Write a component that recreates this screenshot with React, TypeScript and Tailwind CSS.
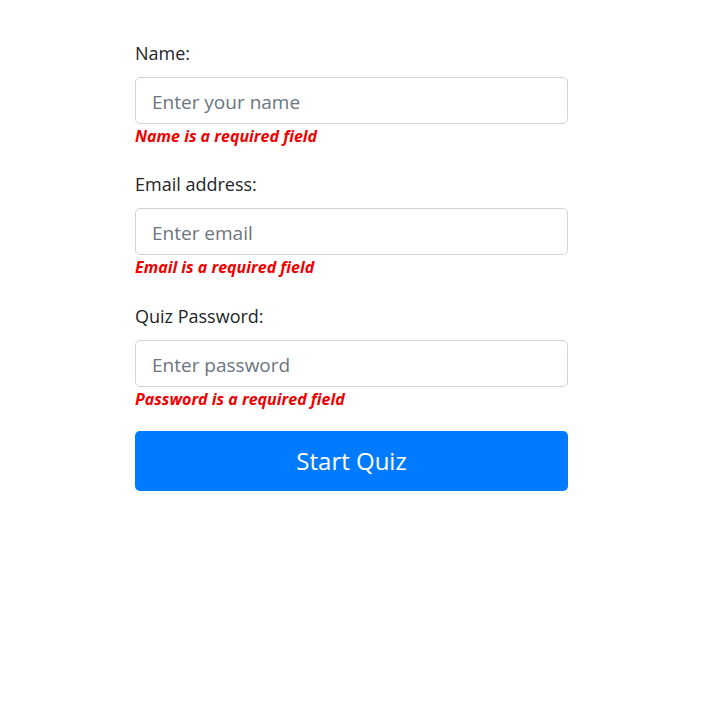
const fields = [
  { label: "Name:", placeholder: "Enter your name", error: "Name is a required field", type: "text", gap: "mb-[25px]" },
  { label: "Email address:", placeholder: "Enter email", error: "Email is a required field", type: "email", gap: "mb-[26px]" },
  { label: "Quiz Password:", placeholder: "Enter password", error: "Password is a required field", type: "password", gap: "mb-[22px]" },
];

export default function App() {
  return (
    <div className="min-h-[712px] w-full bg-white font-['Open_Sans',sans-serif] text-[#212529]">
      <form className="ml-[135px] w-[433px] pt-[40px]" onSubmit={(e) => e.preventDefault()}>
        {fields.map((f) => (
          <div key={f.label} className={f.gap}>
            <label className="mb-[10px] block text-[18px] leading-[27px]">{f.label}</label>
            <input
              type={f.type}
              placeholder={f.placeholder}
              className="block h-[47px] w-full rounded-[5px] border border-[#ced4da] px-4 pt-[2px] text-[19px] text-[#495057] placeholder:text-[#6c757d] outline-none"
            />
            <div className="mt-[2px] text-[16px] font-bold italic leading-[20px] text-[#ee0000]">{f.error}</div>
          </div>
        ))}
        <button
          type="submit"
          className="block h-[60px] w-full rounded-[5px] bg-[#007bff] text-[24px] text-white"
        >
          Start Quiz
        </button>
      </form>
    </div>
  );
}
